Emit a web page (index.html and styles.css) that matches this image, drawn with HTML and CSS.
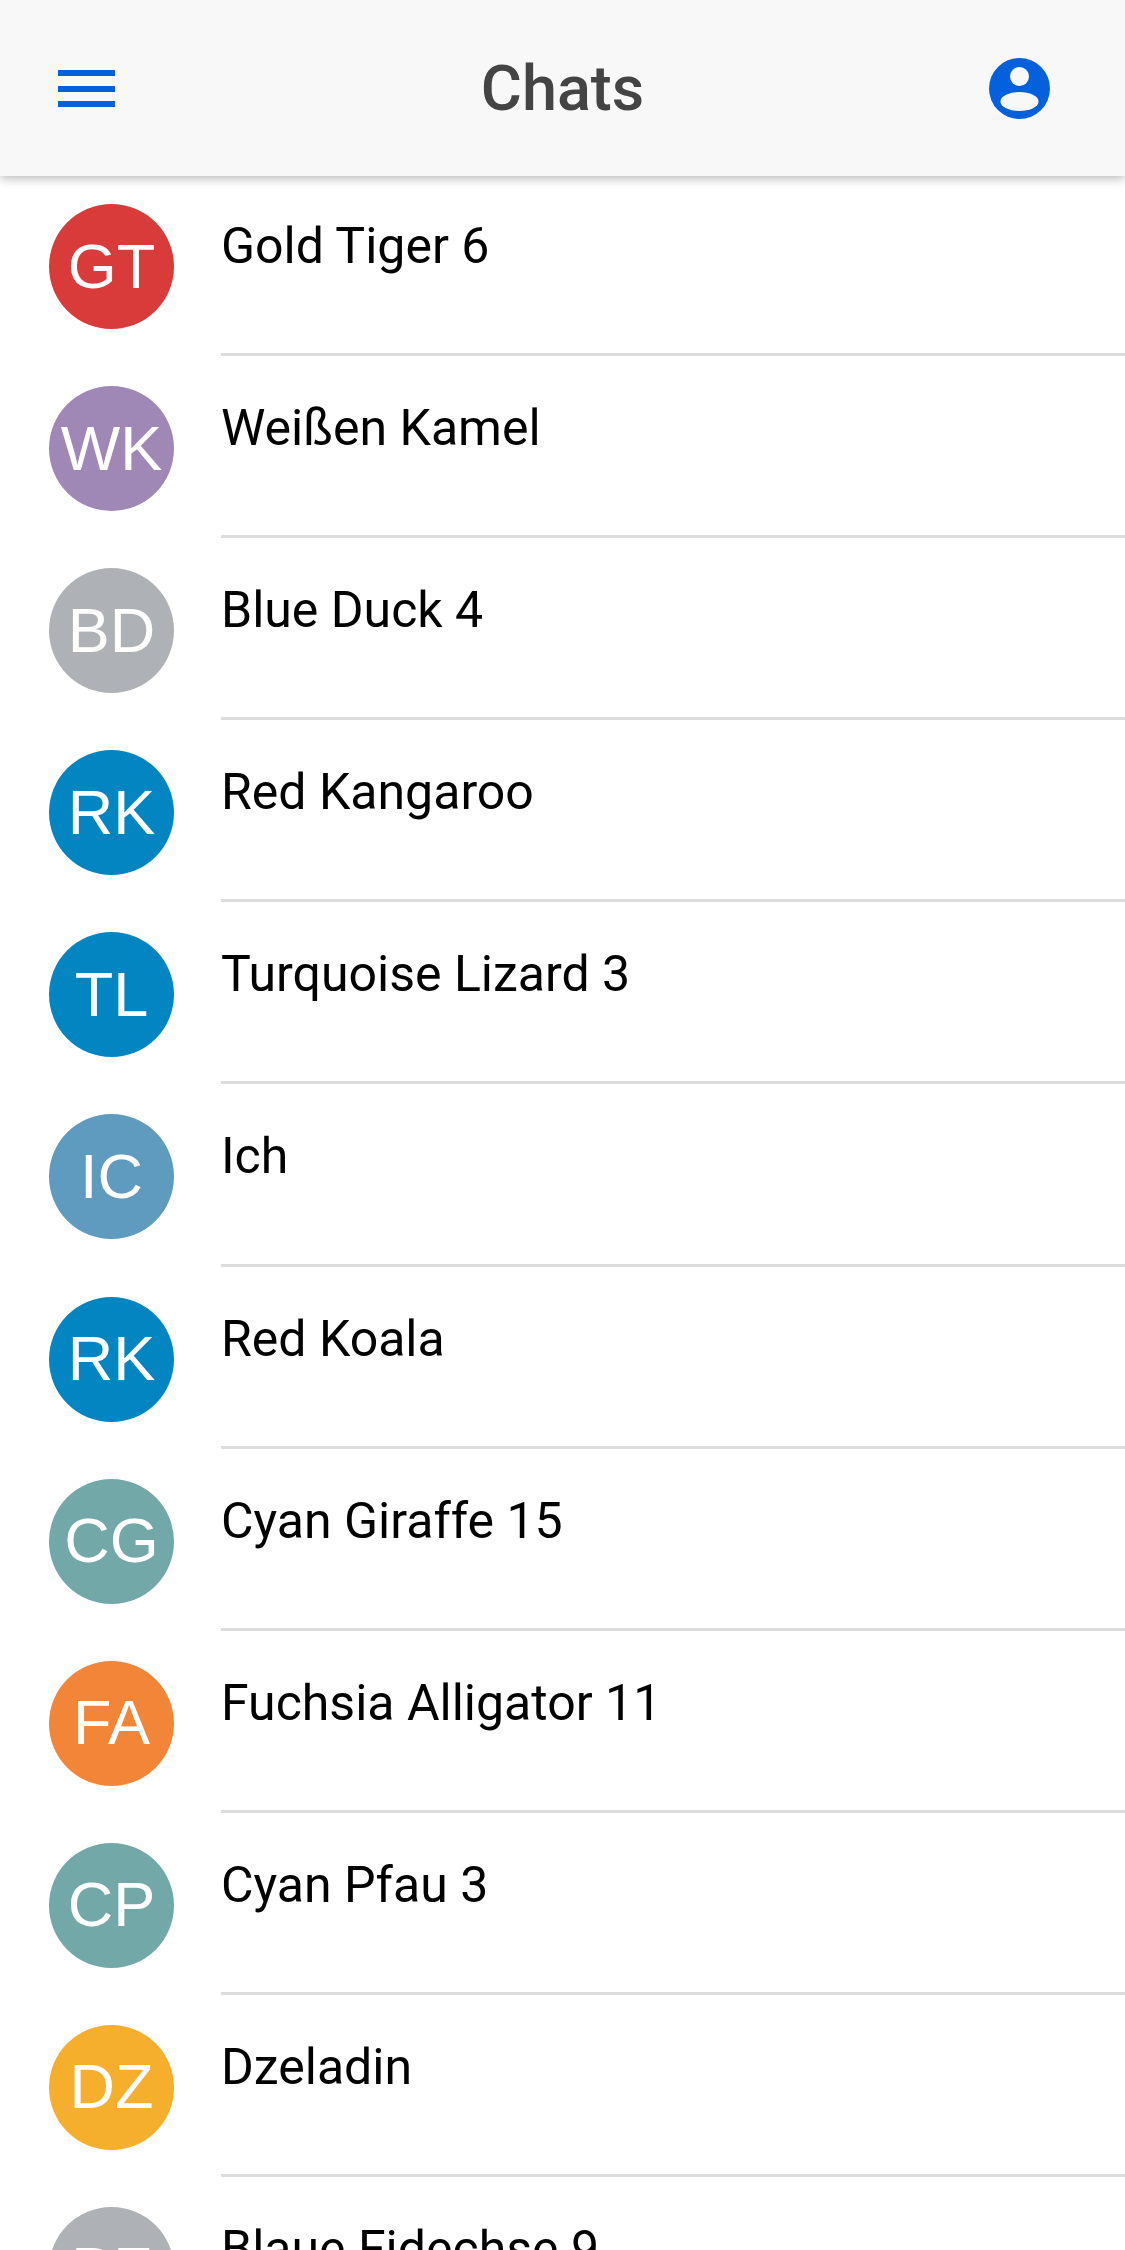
FILE: index.html
```html
<!DOCTYPE html>
<html>
<head>
    <title>Chats</title>
    <meta charset="utf-8">
    <link rel="stylesheet" href="styles.css">
</head>
<body>
    <header class="topbar">
        <svg class="icon-menu" viewBox="0 0 57 37" width="57" height="37" fill="#0560dc">
            <rect x="0" y="0" width="57" height="6"/>
            <rect x="0" y="16" width="57" height="6"/>
            <rect x="0" y="31" width="57" height="6"/>
        </svg>
        <h1 class="title">Chats</h1>
        <svg class="icon-user" viewBox="0 0 61 61" width="61" height="61">
            <circle cx="30.5" cy="30.5" r="30.5" fill="#0560dc"/>
            <circle cx="30.5" cy="18.5" r="9.5" fill="#f8f8f8"/>
            <ellipse cx="30.5" cy="43.5" rx="19" ry="9.5" fill="#f8f8f8"/>
        </svg>
    </header>
    <main class="chat-list">
        <div class="chat-row"><div class="avatar red">GT</div><div class="chat-body">Gold Tiger 6</div></div>
        <div class="chat-row"><div class="avatar purple">WK</div><div class="chat-body">Weißen Kamel</div></div>
        <div class="chat-row"><div class="avatar grey">BD</div><div class="chat-body">Blue Duck 4</div></div>
        <div class="chat-row"><div class="avatar blue">RK</div><div class="chat-body">Red Kangaroo</div></div>
        <div class="chat-row"><div class="avatar blue">TL</div><div class="chat-body">Turquoise Lizard 3</div></div>
        <div class="chat-row"><div class="avatar steel">IC</div><div class="chat-body">Ich</div></div>
        <div class="chat-row"><div class="avatar blue">RK</div><div class="chat-body">Red Koala</div></div>
        <div class="chat-row"><div class="avatar teal">CG</div><div class="chat-body">Cyan Giraffe 15</div></div>
        <div class="chat-row"><div class="avatar orange">FA</div><div class="chat-body">Fuchsia Alligator 11</div></div>
        <div class="chat-row"><div class="avatar teal">CP</div><div class="chat-body">Cyan Pfau 3</div></div>
        <div class="chat-row"><div class="avatar yellow">DZ</div><div class="chat-body">Dzeladin</div></div>
        <div class="chat-row"><div class="avatar grey">BF</div><div class="chat-body">Blaue Fidechse 9</div></div>
    </main>
</body>
</html>
```

FILE: styles.css
```css
html, body {
    margin: 0;
    padding: 0;
    height: 2250px;
    overflow: hidden;
    background: #fff;
    font-family: Roboto, sans-serif;
}

.topbar {
    position: relative;
    z-index: 1;
    box-sizing: border-box;
    height: 176px;
    padding: 0 58px;
    display: grid;
    grid-template-columns: 1fr auto 1fr;
    align-items: center;
    background: #f8f8f8;
    box-shadow: 0 2px 10px rgba(0, 0, 0, .3);
}

.icon-user {
    justify-self: end;
    margin-right: 17px;
}

.title {
    margin: 0;
    font-size: 63px;
    font-weight: 500;
    color: #444;
}

.chat-list {
    margin-top: -2px;
}

.chat-row {
    display: flex;
    height: 182.1px;
    padding-left: 49px;
    box-sizing: border-box;
}

.avatar {
    flex: none;
    box-sizing: border-box;
    width: 125px;
    height: 125px;
    margin-top: 30px;
    padding-bottom: 2px;
    border-radius: 50%;
    display: flex;
    align-items: center;
    justify-content: center;
    font-family: "Liberation Sans", sans-serif;
    font-size: 63px;
    color: #fff;
}

.chat-body {
    flex: 1;
    margin-left: 47px;
    padding-top: 43px;
    font-size: 50px;
    line-height: 58px;
    color: #000;
    border-bottom: 3px solid #dcdcdc;
}

.red { background: #d93a3a; }
.purple { background: #9f88b5; }
.grey { background: #aeb2b6; }
.blue { background: #0385c2; }
.steel { background: #5f9abf; }
.teal { background: #72a9a8; }
.orange { background: #f38538; }
.yellow { background: #f6ae2d; }
```
